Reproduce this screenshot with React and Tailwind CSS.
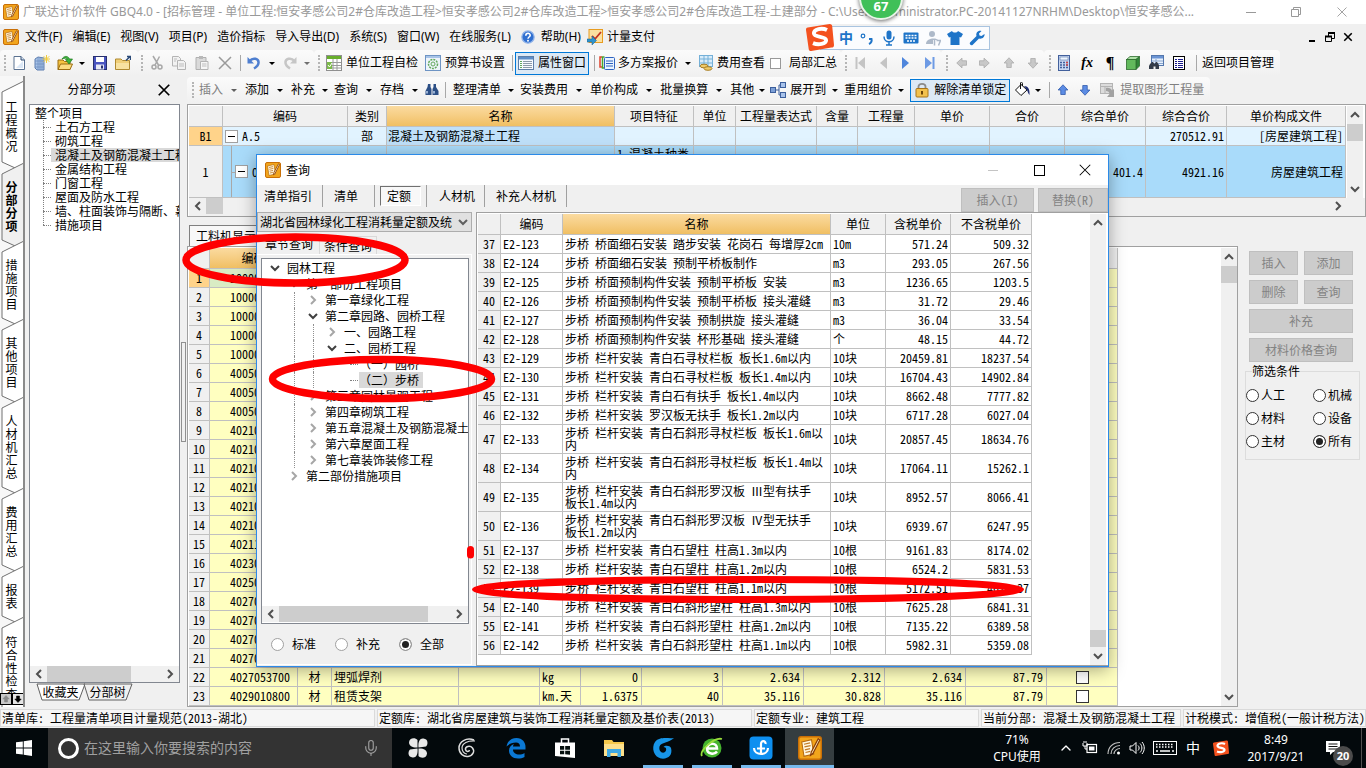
import { Mic, ChevronUp } from 'lucide-react'

const song = "font-['Noto_Sans_Mono_CJK_SC','Noto_Sans_CJK_SC','Liberation_Mono',monospace]"

/* ---------- icons ---------- */

const Svg = ({ children, className = 'w-4 h-4', box = '0 0 16 16' }) => (
    <svg viewBox={box} className={`shrink-0 ${className}`} fill="none" aria-hidden="true">{children}</svg>
)

const AppIcon = ({ className }) => (
    <Svg className={className}>
        <rect x="0.5" y="0.5" width="15" height="15" rx="1.5" fill="#f2a51c" stroke="#c96f06" />
        <path d="M2.5 4 L9 2.5 L10.5 12 L4 13.5 Z" fill="#fff8e0" stroke="#b56a10" strokeWidth="0.7" />
        <path d="M4 5.5 L8 4.6 M4.3 7.3 L8.4 6.4 M4.6 9.2 L8 8.4 M5 11 L8.2 10.2" stroke="#c07a28" strokeWidth="0.8" />
        <path d="M13.5 1.8 L14.6 2.6 L10 11.5 L8.4 12.8 L8.8 10.8 Z" fill="#fdf0c0" stroke="#8a3c08" strokeWidth="0.8" />
    </Svg>
)

const NewIcon = () => (
    <Svg>
        <path d="M3 1.5 H10 L13.5 5 V14.5 H3 Z" fill="#fff" stroke="#5b7291" />
        <path d="M10 1.5 V5 H13.5" fill="#d6e2f2" stroke="#2f4a70" />
        <path d="M5 13 L12 6 V13 Z" fill="#dbe7f5" />
    </Svg>
)

const BuildingIcon = () => (
    <Svg>
        <path d="M1 4 L4 2 L10 3 V15 H3 L1 13 Z" fill="#a9c4e8" stroke="#5f7fb0" />
        <path d="M4 2 V15 M6 3 V15 M8 3 V15 M1 6 H10 M1 9 H10 M1 12 H10" stroke="#6f8fc0" strokeWidth="0.8" />
        <path d="M12.5 0 V8 M8.5 4 H16.5 M9.7 1.2 L15.3 6.8 M15.3 1.2 L9.7 6.8" stroke="#f0cc3c" />
    </Svg>
)

const OpenIcon = () => (
    <Svg>
        <path d="M1 5 H6 L7.5 6.5 H13 V14.5 H1 Z" fill="#f5c341" stroke="#9b6d12" />
        <path d="M3.5 9 H15.5 L13 14.5 H1 Z" fill="#fbdc80" stroke="#9b6d12" />
        <path d="M5 4 C7 0.5 11 0.5 12.5 4 H15.5 L12 9 L8.5 4.5 H10.5 C9.5 2.500 7.500 3 5 4 Z" fill="#3cb43c" stroke="#1d7a1d" strokeWidth="0.7" />
    </Svg>
)

const SaveIcon = () => (
    <Svg>
        <rect x="1.5" y="1.5" width="13" height="13" fill="#4a55c0" stroke="#28306f" />
        <rect x="4" y="2" width="8" height="5" fill="#fff" />
        <rect x="4" y="9.5" width="8" height="5" fill="#e8eaf5" />
        <rect x="9" y="10.5" width="2" height="3" fill="#28306f" />
    </Svg>
)

const FolderIcon = () => (
    <Svg>
        <path d="M0.5 4 H6 L7.5 5.5 H14.5 V14.5 H0.5 Z" fill="#f0cf78" stroke="#b08a30" />
        <path d="M1 8 H14 V14 H1 Z" fill="#f8e2a0" />
        <path d="M11 5.5 L14.5 2 M12 1.5 H15.5 V5" stroke="#2b4a78" strokeWidth="1.5" />
    </Svg>
)

const CutIcon = () => (
    <Svg>
        <path d="M4 1 L9.5 10 M10.5 1.5 L6 10" stroke="#a8a8a8" strokeWidth="1.5" />
        <circle cx="5" cy="12" r="2" stroke="#a8a8a8" strokeWidth="1.5" />
        <circle cx="11" cy="12" r="2" stroke="#a8a8a8" strokeWidth="1.5" />
    </Svg>
)

const CopyIcon = () => (
    <Svg>
        <path d="M1.5 1.5 H7.5 L9.5 3.5 V11 H1.5 Z" fill="#f2f2f2" stroke="#b4b4b4" />
        <path d="M6.5 5.5 H12.5 L14.5 7.5 V14.5 H6.5 Z" fill="#f2f2f2" stroke="#b4b4b4" />
        <path d="M8 9 H13 M8 11 H13 M3 4 H6 M3 6 H5" stroke="#bdbdbd" />
    </Svg>
)

const PasteIcon = () => (
    <Svg>
        <path d="M2 2.5 H12 V14.5 H2 Z" fill="#dadada" stroke="#b0b0b0" />
        <rect x="5" y="1" width="4" height="3" fill="#b8b8b8" />
        <path d="M6.5 6.5 H14 V14.5 H6.5 Z" fill="#f6f6f6" stroke="#b4b4b4" />
        <path d="M8 9 H12.5 M8 11 H12.5" stroke="#bdbdbd" />
    </Svg>
)

const CrossIcon = ({ className = 'w-4 h-4', stroke = '#9a9a9a', width = 1.5 }) => (
    <Svg className={className}><path d="M2 2 L14 14 M14 2 L2 14" stroke={stroke} strokeWidth={width} /></Svg>
)

const TurnIcon = ({ flip, color }) => (
    <Svg className={flip ? 'w-4 h-4 -scale-x-100' : 'w-4 h-4'}>
        <path d="M3.5 6 C7 2 13 3.5 12.5 8 C12.3 10.5 10.5 12 8 13.5" stroke={color} strokeWidth="2.5" />
        <path d="M1.5 2 V8.5 H8 Z" fill={color} />
    </Svg>
)

const SheetIcon = () => (
    <Svg>
        <rect x="0.5" y="0.5" width="15" height="15" fill="#fff" stroke="#8f8f8f" />
        <rect x="1" y="1" width="14" height="3" fill="#67ae2c" />
        <path d="M1 7.5 H15 M1 10.5 H15 M1 13 H15 M7 4 V15 M11 4 V15" stroke="#9a9a9a" />
        <rect x="1" y="7" width="5" height="7" fill="#7cba4a" />
        <path d="M2 10 L3.5 12 L6 8" stroke="#fff" />
    </Svg>
)

const GearIcon = () => (
    <Svg>
        <rect x="0.5" y="0.5" width="15" height="15" fill="#eef4fb" stroke="#6e94c4" />
        <rect x="1" y="1" width="14" height="2" fill="#a8c4e8" />
        <circle cx="8" cy="9" r="4.5" stroke="#62a95c" strokeDasharray="2 1" strokeWidth="1.5" />
        <circle cx="8" cy="9" r="2" stroke="#62a95c" />
    </Svg>
)

const ListWindowIcon = () => (
    <Svg>
        <rect x="0.5" y="1.5" width="15" height="13" fill="#f7fbff" stroke="#5e7fa8" />
        <rect x="1" y="2" width="14" height="2.5" fill="#5f8fc8" />
        <path d="M2 6.5 H4 M2 8.5 H4 M2 10.5 H4 M2 12.5 H4" stroke="#62a95c" />
        <path d="M5 6.5 H14 M5 8.5 H14 M5 10.5 H14 M5 12.5 H14" stroke="#8d9aaa" />
    </Svg>
)

const PlansIcon = () => (
    <Svg>
        <path d="M3 2 H1 V12 H3" stroke="#e0432c" strokeWidth="1.5" />
        <path d="M5.5 2 H3.5 V13 H5.5" stroke="#49a52d" strokeWidth="1.5" />
        <rect x="5.5" y="2.5" width="10" height="12" rx="1" fill="#eaf3ff" stroke="#2d62c0" />
        <path d="M7 6 H14 M7 8.5 H14 M7 11 H14" stroke="#2d62c0" />
    </Svg>
)

const FeeIcon = () => (
    <Svg>
        <rect x="1.5" y="0.5" width="13" height="11" fill="#d8ecfa" stroke="#74b0d8" />
        <path d="M1 4 H15 M1 8 H15 M6 1 V11 M10 1 V11" stroke="#74b0d8" />
        <ellipse cx="6" cy="11" rx="4" ry="1.8" fill="#f0cb6a" stroke="#a87f28" />
        <ellipse cx="10" cy="13.5" rx="4" ry="1.8" fill="#f0cb6a" stroke="#a87f28" />
    </Svg>
)

const StepIcon = ({ flip, bar, color }) => (
    <Svg className={flip ? 'w-4 h-4 -scale-x-100' : 'w-4 h-4'}>
        <path d="M4 2 L11 8 L4 14 Z" fill={color} />
        {bar && <path d="M12.5 2 V14" stroke={color} strokeWidth="2" />}
    </Svg>
)

const turns = { left: '', up: 'rotate-90', right: 'rotate-180', down: '-rotate-90' }
const ArrowIcon = ({ dir, color = '#c8c8c8', line = '#a8a8a8', size = 'w-3 h-3' }) => (
    <Svg className={`${size} ${turns[dir]}`}>
        <path d="M1 8 L8 1.5 V5 H14 V11 H8 V14.5 Z" fill={color} stroke={line} />
    </Svg>
)

const CalcIcon = () => (
    <Svg>
        <rect x="2.5" y="0.5" width="11" height="15" fill="#c9d8f2" stroke="#42609c" />
        <rect x="4" y="2" width="8" height="3" fill="#eef6ff" stroke="#42609c" strokeWidth="0.5" />
        <path d="M4 7.5 H12 M4 10 H12 M4 12.5 H12" stroke="#42609c" strokeDasharray="2 1" strokeWidth="1.5" />
        <path d="M10 7.5 H12 M10 10 H12" stroke="#d04848" strokeWidth="1.5" />
    </Svg>
)

const CubeIcon = () => (
    <Svg>
        <path d="M1.5 4.5 L5 1.5 H14.5 L11 4.5 Z" fill="#b0e2a8" stroke="#2f6c2f" strokeWidth="0.8" />
        <path d="M11 4.5 L14.5 1.5 V11 L11 14.5 Z" fill="#2f8638" stroke="#2f6c2f" strokeWidth="0.8" />
        <rect x="1.5" y="4.5" width="9.5" height="10" fill="#62b95c" stroke="#2f6c2f" strokeWidth="0.8" />
    </Svg>
)

const BinocularIcon = () => (
    <Svg>
        <path d="M4 2 H6.5 V5 L7.5 7 V13 H1.5 V9 L3.5 5 Z M9.5 2 H12 V5 L14.5 9 V13 H8.5 V7 L9.5 5 Z" fill="#2c4f86" />
        <path d="M3 9 V11.5 M10 9 V11.5" stroke="#bcd2f0" strokeWidth="1.5" />
    </Svg>
)

const FindSheetIcon = () => (
    <Svg>
        <rect x="3.5" y="0.5" width="12" height="10" fill="#e8f1fc" stroke="#5477ac" />
        <rect x="4" y="1" width="11" height="2.5" fill="#6b94d4" />
        <path d="M4 6 H15 M4 8.5 H15 M8 4 V10" stroke="#8aa7d0" />
        <path d="M2 9 L4 7 H5 L6.5 9 L8 7 H9 L11 10 V14 H7.5 V11.5 H5.5 V14 H1 V11 Z" fill="#333c4a" />
    </Svg>
)

const RowsIcon = () => (
    <Svg>
        <rect x="2.5" y="1.5" width="11" height="13" fill="#fff" stroke="#000" />
        <path d="M4 4.5 H6 M7 4.5 H12 M4 6.5 H6 M7 6.5 H12 M4 8.5 H6 M7 8.5 H12 M4 10.5 H6 M7 10.5 H12 M4 12.5 H6 M7 12.5 H12" stroke="#1b1b8c" />
    </Svg>
)

const ExpandIcon = () => (
    <Svg>
        <rect x="0.5" y="5.5" width="5" height="5" fill="#7c9fd6" stroke="#3c5f9c" />
        <path d="M6 8 H9 M9 3 V13 H11 M9 3 H11" stroke="#3c5f9c" />
        <rect x="10.5" y="0.5" width="5" height="5" fill="#a8c2ea" stroke="#3c5f9c" />
        <rect x="10.5" y="10.5" width="5" height="5" fill="#a8c2ea" stroke="#3c5f9c" />
    </Svg>
)

const LockIcon = () => (
    <Svg>
        <path d="M4.5 7 V4.5 C4.5 1 11.5 1 11.5 4.5 V7" stroke="#8c8c8c" strokeWidth="1.8" />
        <rect x="2" y="6.5" width="12" height="8.5" rx="1" fill="#f2c14e" stroke="#a87518" />
        <path d="M8 9 V12.5" stroke="#6a4408" strokeWidth="2" />
    </Svg>
)

const BucketIcon = () => (
    <Svg>
        <path d="M7 2.5 L13 8 L7 13.5 L1.5 8 Z" fill="#fff" stroke="#111" />
        <path d="M6.5 7 V1 C6.5 0 8.5 0 8.5 1.5 V4" stroke="#111" />
        <path d="M10 4 C14 4 16 7 15.500 13 C13.5 11 14 9.500 13 8 Z" fill="#1c2a70" />
    </Svg>
)

const ExtractIcon = () => (
    <Svg>
        <rect x="0.5" y="1.5" width="12" height="10" fill="#dcdcdc" stroke="#b4b4b4" />
        <path d="M1 4.5 H12 M5 4 V11" stroke="#b4b4b4" />
        <path d="M6 6 C9 5.500 11 6.500 12 8.500 L14 7 V15 H7 L9.500 12 C9.500 10 8 9 6 9 Z" fill="#a2a2a2" />
    </Svg>
)

const HelpIcon = () => (
    <Svg className="w-3.5 h-3.5">
        <circle cx="8" cy="8" r="7" fill="#2f6fd0" stroke="#8fb2e8" strokeWidth="1.5" />
        <path d="M5.5 6.5 C5.5 3 10.5 3 10.5 6 C10.5 8 8 8 8 10" stroke="#fff" strokeWidth="1.8" />
        <circle cx="8" cy="12.2" r="1.1" fill="#fff" />
    </Svg>
)

const PayIcon = () => (
    <Svg>
        <rect x="2" y="0.5" width="13.5" height="13" fill="#fbe0a0" stroke="#e89c20" />
        <path d="M5 7 L8 10 L14 3" stroke="#c23020" strokeWidth="1.8" />
        <path d="M0 10 H5 V7 L9.5 11.5 L5 16 V13 H0 Z" fill="#2f93cc" stroke="#1b618c" strokeWidth="0.5" />
    </Svg>
)

const SogouIcon = ({ className }) => (
    <Svg className={className}>
        <path d="M1 2.5 L13.5 0.5 C14.5 0.5 15 1 15 2 L16 12.5 C16 13.5 15.5 14 14.5 14 L3 16 C2 16 1.6 15.5 1.5 14.5 L0 4 C0 3 0.2 2.7 1 2.5 Z" fill="#f4511e" />
        <path d="M12 4 C9 2.5 4.5 3.5 4.5 5.8 C4.5 8.5 11.5 7.3 11.5 9.8 C11.5 12 7 12.8 4 11.5" stroke="#fff" strokeWidth="2.2" />
    </Svg>
)

const chevrons = { up: '', right: 'rotate-90', down: 'rotate-180', left: '-rotate-90' }
const Chevron = ({ dir, color = '#505050', className = 'w-2.5 h-2.5' }) => (
    <Svg box="0 0 10 10" className={`${className} ${chevrons[dir]}`}>
        <path d="M1 7 L5 3 L9 7" stroke={color} strokeWidth="2" />
    </Svg>
)

/* ---------- toolbar parts ---------- */

const Group = ({ children }) => (
    <div className="flex h-[26px] items-center rounded-sm bg-linear-to-b from-[#fbfbfb] to-[#f0f0f0]">{children}</div>
)

const Grip = ({ className = 'w-2.5' }) => (
    <span className={`flex justify-center shrink-0 ${className}`}>
        <span className="h-4 border-l-2 border-dotted border-[#b5b5b5]" />
    </span>
)

const Sep = ({ className = 'w-2' }) => (
    <span className={`flex justify-center shrink-0 ${className}`}><span className="h-4 w-px bg-[#a8a8a8]" /></span>
)

const Tool = ({ label, className, children }) => (
    <button type="button" aria-label={label} className={`flex h-6 shrink-0 items-center justify-center ${className}`}>{children}</button>
)

const Caret = ({ className = 'w-[22px]', color = 'border-t-black' }) => (
    <span className={`flex shrink-0 justify-center ${className}`}>
        <span className={`border-x-3 border-t-3 border-x-transparent ${color}`} />
    </span>
)

const Drop = ({ children, caret = 'w-[22px]', muted }) => (
    <button type="button" className={`flex h-6 shrink-0 items-center whitespace-nowrap ${muted ? 'text-[#808080]' : ''}`}>
        {children}
        <Caret className={caret} color={muted ? 'border-t-[#606060]' : 'border-t-black'} />
    </button>
)

/* ---------- top of the window ---------- */

const TitleBar = () => (
    <header className="flex h-6 shrink-0 items-center bg-white pl-[3px] text-[#999]">
        <AppIcon className="w-4 h-4" />
        <h1 className="ml-1 w-[1204px] truncate text-xs">
            广联达计价软件 GBQ4.0 - [招标管理 - 单位工程:恒安孝感公司2#仓库改造工程&gt;恒安孝感公司2#仓库改造工程&gt;恒安孝感公司2#仓库改造工程-土建部分 - C:\Users\Administrator.PC-20141127NRHM\Desktop\恒安孝感公...
        </h1>
        <div className="ml-auto flex">
            <Tool label="最小化" className="w-[46px]"><span className="h-px w-2.5 bg-[#999]" /></Tool>
            <Tool label="还原" className="w-11">
                <Svg className="w-3 h-3" box="0 0 12 12"><path d="M1.5 3.5 H8.5 V10.5 H1.5 Z M3.5 3.5 V1.5 H10.5 V8.5 H8.5" stroke="#999" /></Svg>
            </Tool>
            <Tool label="关闭" className="w-12"><CrossIcon className="w-3 h-3" width={1.2} /></Tool>
        </div>
    </header>
)

const menus = ['文件(F)', '编辑(E)', '视图(V)', '项目(P)', '造价指标', '导入导出(D)', '系统(S)', '窗口(W)', '在线服务(L)']

const MenuBar = () => (
    <nav className="flex h-[26px] shrink-0 items-center pl-[3px] text-xs">
        <AppIcon className="w-4 h-4" />
        <div className="ml-1.5 flex items-center gap-2.5 whitespace-nowrap">
            {menus.map((m) => <button type="button" key={m}>{m}</button>)}
            <button type="button" className="flex items-center gap-1.5"><HelpIcon />帮助(H)</button>
        </div>
        <button type="button" className="ml-1.5 flex items-center gap-1"><PayIcon />计量支付</button>
        <div className="ml-auto flex pr-2">
            <Tool label="最小化文档" className="w-5"><span className="mt-2 h-0.5 w-1.5 bg-black" /></Tool>
            <Tool label="还原文档" className="w-4">
                <Svg className="w-2.5 h-2.5" box="0 0 10 10"><path d="M0.5 4.5 H6.5 V9.5 H0.5 Z M3.5 4.5 V1 H9.5 V6.5 H6.5" stroke="#000" /><path d="M3 1 H10 M0 4.5 H7" stroke="#000" strokeWidth="2" /></Svg>
            </Tool>
            <Tool label="关闭文档" className="w-5"><CrossIcon className="w-2.5 h-2.5" stroke="#000" width={2.5} /></Tool>
        </div>
    </nav>
)

const MainToolbar = () => (
    <div className="flex h-[26px] shrink-0 items-center text-xs">
        <Group>
            <Grip />
            <Tool label="新建" className="w-[17px]"><NewIcon /></Tool>
            <Tool label="新建工程" className="w-[30px]"><BuildingIcon /></Tool>
            <Tool label="打开" className="w-4"><OpenIcon /></Tool>
            <Caret className="w-[18px]" />
            <Tool label="保存" className="w-[17px]"><SaveIcon /></Tool>
            <Tool label="关闭工程" className="w-[30px]"><FolderIcon /></Tool>
        </Group>
        <Group>
            <Grip className="w-2" />
            <Tool label="剪切" className="w-[22px]"><CutIcon /></Tool>
            <Tool label="复制" className="w-[21px]"><CopyIcon /></Tool>
            <Tool label="粘贴" className="w-[26px]"><PasteIcon /></Tool>
            <Tool label="删除" className="w-5"><CrossIcon /></Tool>
            <Sep className="w-2.5" />
            <Tool label="撤消" className="w-[18px]"><TurnIcon color="#4f7fd0" /></Tool>
            <Caret className="w-[17px]" />
            <Tool label="恢复" className="w-[19px]"><TurnIcon flip color="#c6c6c6" /></Tool>
            <Caret className="w-[15px]" color="border-t-[#707070]" />
        </Group>
        <Group>
            <Grip />
            <button type="button" className="flex shrink-0 items-center gap-1 pl-0.5 pr-[5px] whitespace-nowrap"><SheetIcon />单位工程自检</button>
            <button type="button" className="flex shrink-0 items-center gap-1 pl-0.5 pr-[5px] whitespace-nowrap"><GearIcon />预算书设置</button>
            <Sep className="w-[5px]" />
            <button type="button" className="flex h-[23px] shrink-0 items-center gap-1 border border-[#0078d7] bg-[#dce9f5] px-0.5 whitespace-nowrap"><ListWindowIcon />属性窗口</button>
            <Sep className="w-2.5" />
            <button type="button" className="flex shrink-0 items-center gap-[3px] whitespace-nowrap"><PlansIcon />多方案报价</button>
            <Caret className="w-5" />
            <button type="button" className="flex shrink-0 items-center gap-[3px] pr-[5px] whitespace-nowrap"><FeeIcon />费用查看</button>
            <label className="flex shrink-0 items-center gap-2 pr-1 whitespace-nowrap">
                <input type="checkbox" className="h-[11px] w-[11px] appearance-none border border-[#999] bg-white" />
                局部汇总
            </label>
        </Group>
        <Group>
            <Grip />
            <Tool label="首条" className="w-[19px]"><StepIcon flip bar color="#c4c4c4" /></Tool>
            <Tool label="上一条" className="w-[25px]"><StepIcon flip color="#c4c4c4" /></Tool>
            <Tool label="下一条" className="w-[22px]"><StepIcon color="#4f86dc" /></Tool>
            <Tool label="末条" className="w-6"><StepIcon bar color="#6d9ae4" /></Tool>
        </Group>
        <Group>
            <Grip className="w-3" />
            <Tool label="左移" className="w-[18px]"><ArrowIcon dir="left" /></Tool>
            <Tool label="右移" className="w-[26px]"><ArrowIcon dir="right" /></Tool>
            <Tool label="上移" className="w-6"><ArrowIcon dir="up" /></Tool>
            <Tool label="下移" className="w-[23px]"><ArrowIcon dir="down" /></Tool>
        </Group>
        <Group>
            <Grip className="w-3" />
            <Tool label="计算器" className="w-4"><CalcIcon /></Tool>
            <Tool label="函数" className="w-[30px] font-['Liberation_Serif',serif] text-sm font-bold italic">fx</Tool>
            <Tool label="段落" className="w-4 font-['Liberation_Serif',serif] text-base font-bold">¶</Tool>
            <Tool label="图元" className="w-[30px]"><CubeIcon /></Tool>
            <Tool label="查找" className="w-4"><FindSheetIcon /></Tool>
            <Tool label="列表" className="w-[30px]"><RowsIcon /></Tool>
            <Sep className="w-1" />
            <button type="button" className="shrink-0 pl-1 pr-1.5 whitespace-nowrap">返回项目管理</button>
        </Group>
    </div>
)

const EditToolbar = () => (
    <div className="flex h-7 shrink-0 items-center text-xs">
        <Group>
            <Grip className="w-3" />
            <Drop muted>插入</Drop>
            <Drop>添加</Drop>
            <Drop caret="w-[19px]">补充</Drop>
            <Drop>查询</Drop>
            <Drop>存档</Drop>
            <Tool label="查找" className="w-[11px]"><BinocularIcon /></Tool>
            <Sep className="w-4" />
            <Drop caret="w-[19px]">整理清单</Drop>
            <Drop>安装费用</Drop>
            <Drop>单价构成</Drop>
            <Drop>批量换算</Drop>
            <Drop caret="w-4">其他</Drop>
            <Drop caret="w-[18px]"><ExpandIcon /><span className="ml-1">展开到</span></Drop>
            <Drop caret="w-[18px]">重用组价</Drop>
            <button type="button" className="flex h-[23px] shrink-0 items-center gap-1 border border-[#0078d7] bg-[#dce9f5] px-[3px] whitespace-nowrap"><LockIcon />解除清单锁定</button>
            <Tool label="填充" className="ml-1 w-4"><BucketIcon /></Tool>
            <Caret className="w-4" />
            <Sep className="w-1.5" />
            <Tool label="上移" className="w-[22px]"><ArrowIcon dir="up" color="#5c8ce4" line="#2c55a8" /></Tool>
            <Tool label="下移" className="w-[22px]"><ArrowIcon dir="down" color="#5c8ce4" line="#2c55a8" /></Tool>
            <button type="button" className="ml-1 flex items-center gap-1 pr-1.5 whitespace-nowrap text-[#808080]"><ExtractIcon />提取图形工程量</button>
        </Group>
    </div>
)

/* ---------- left side ---------- */

const sideTabs = [
    { text: '工程概况', h: 82 },
    { text: '分部分项', h: 78, active: true },
    { text: '措施项目', h: 78 },
    { text: '其他项目', h: 78 },
    { text: '人材机汇总', h: 91 },
    { text: '费用汇总', h: 78 },
    { text: '报表', h: 51 },
    { text: '符合性检查', h: 92 },
]

const SideTabs = () => (
    <div className="relative flex w-[25px] shrink-0 flex-col overflow-hidden border-r-2 border-[#8a8a8a] bg-[#f7f7f7] pt-2.5">
        {sideTabs.map(({ text, h, active }) => (
            <button type="button" key={text} className="relative flex w-full shrink-0 items-center justify-center" style={{ height: h }}>
                <svg className="absolute inset-0 h-full w-full overflow-visible" aria-hidden="true">
                    <polygon points={`24,-5 2,6 2,${h - 6} 24,${h + 4}`} fill={active ? '#f0f0f0' : '#fff'} stroke="#707070" />
                </svg>
                <span className={`relative w-3 text-xs leading-[13px] break-all ${active ? 'font-bold' : ''}`}>{text}</span>
            </button>
        ))}
        <div className="absolute bottom-0.5 left-0 flex">
            <button type="button" aria-label="上翻" className="flex h-3 w-3 items-center justify-center border border-black bg-[#c8c8c8]"><ArrowIcon dir="up" color="#888" line="#888" size="w-2 h-2" /></button>
            <button type="button" aria-label="下翻" className="flex h-3 w-3 items-center justify-center border border-black bg-[#e4e4e4]"><ArrowIcon dir="down" color="#000" line="#000" size="w-2 h-2" /></button>
        </div>
    </div>
)

const sections = ['土石方工程', '砌筑工程', '混凝土及钢筋混凝土工程', '金属结构工程', '门窗工程', '屋面及防水工程', '墙、柱面装饰与隔断、幕', '措施项目']

const HScroll = ({ thumb }) => (
    <div className="flex h-4 items-center bg-[#f0f0f0] px-1">
        <Chevron dir="left" />
        <div className="mx-[3px] h-full grow"><div className={`h-full bg-[#cdcdcd] ${thumb}`} /></div>
        <Chevron dir="right" />
    </div>
)

const VScroll = ({ thumb }) => (
    <div className="flex w-4 shrink-0 flex-col items-center bg-[#f0f0f0] py-1">
        <Chevron dir="up" />
        <div className={`mt-1 flex w-full grow flex-col ${thumb}`}><div className="h-[17px] w-full bg-[#cdcdcd]" /></div>
        <Chevron dir="down" />
    </div>
)

const SectionPanel = () => (
    <aside className="flex w-[155px] shrink-0 flex-col pl-1 text-xs">
        <div className="flex h-7 items-center pr-0.5">
            <h2 className="grow pl-1 text-center">分部分项</h2>
            <Tool label="关闭面板" className="w-7"><CrossIcon className="w-3.5 h-3.5" stroke="#000" width={2} /></Tool>
        </div>
        <div className="flex grow flex-col border border-[#828790] bg-white">
            <div className={`grow overflow-hidden pt-px leading-[14px] whitespace-nowrap ${song}`}>
                <div className="pl-[5px]">整个项目</div>
                <ul className="relative ml-[13px]">
                    <span className="absolute top-0 left-0 h-[105px] border-l border-dotted border-[#808080]" />
                    {sections.map((s, i) => (
                        <li key={s} className="flex items-center">
                            <span className="w-2 shrink-0 border-t border-dotted border-[#808080]" />
                            <span className={`grow pl-1 ${i === 2 ? 'bg-[#d9d9d9]' : ''}`}>{s}</span>
                        </li>
                    ))}
                </ul>
            </div>
            <HScroll thumb="w-[84px]" />
        </div>
        <div className={`flex h-6 pt-px pl-2 ${song}`}>
            {['收藏夹', '分部树'].map((t) => (
                <button type="button" key={t} className="relative h-4 w-[47px]">
                    <svg className="absolute inset-0 h-full w-full overflow-visible" aria-hidden="true">
                        <polygon points="0,0 5,16 42,16 48,0" fill={t === '收藏夹' ? '#fff' : '#f0f0f0'} stroke="#606060" />
                    </svg>
                    <span className="relative leading-4">{t}</span>
                </button>
            ))}
        </div>
    </aside>
)

/* ---------- upper grid ---------- */

const cell = 'border-r border-b border-[#c0c0c0] overflow-hidden'
const orange = 'bg-linear-to-b from-[#fbdba0] to-[#f0bf62]'

const billCols = [
    ['', 'w-[34px]'], ['编码', 'w-[125px]'], ['类别', 'w-[39px]'], ['名称', 'w-[228px]'], ['项目特征', 'w-[79px]'],
    ['单位', 'w-[42px]'], ['工程量表达式', 'w-[81px]'], ['含量', 'w-[41px]'], ['工程量', 'w-[57px]'], ['单价', 'w-[75px]'],
    ['合价', 'w-[75px]'], ['综合单价', 'w-[81px]'], ['综合合价', 'w-[81px]'], ['单价构成文件', ''],
]

const Minus = () => (
    <span className="flex h-[13px] w-[13px] shrink-0 items-center justify-center border border-[#a0a0a0] bg-white"><span className="h-px w-[7px] bg-black" /></span>
)

const BillGrid = () => (
    <div className="flex h-[113px] shrink-0 flex-col border border-[#a0a0a0] bg-white pt-px pl-px">
        <div className="flex min-h-0 grow">
            <div className="min-w-0 grow overflow-hidden">
                <table className={`w-full table-fixed border-separate border-spacing-0 text-xs leading-4 whitespace-nowrap ${song}`}>
                    <thead>
                        <tr>
                            {billCols.map(([name, w], i) => (
                                <th key={i} className={`h-[21px] font-normal ${cell} ${w} ${name === '名称' ? orange : 'bg-[#f0f0f0]'}`}>{name}</th>
                            ))}
                        </tr>
                    </thead>
                    <tbody>
                        <tr className="bg-[#e1f3ff]">
                            <th className={`h-[19px] bg-[#ffd38a] font-normal ${cell}`}>B1</th>
                            <td className={cell}><span className="flex items-center gap-1 pl-0.5"><Minus />A.5</span></td>
                            <td className={`text-center ${cell}`}>部</td>
                            <td className={`bg-[#bfe0f9] pl-px ${cell}`}>混凝土及钢筋混凝土工程</td>
                            {[4, 5, 6, 7, 8, 9, 10, 11].map((i) => <td key={i} className={cell} />)}
                            <td className={`pr-0.5 text-right ${cell}`}>270512.91</td>
                            <td className={`pr-0.5 text-right ${cell}`}>[房屋建筑工程]</td>
                        </tr>
                        <tr className="bg-[#a9dbfa]">
                            <th className={`h-[52px] bg-[#f0f0f0] font-normal ${cell}`}>1</th>
                            <td className={cell}>
                                <span className="flex h-[51px] pl-2 text-left">
                                    <span className="w-px bg-[#a8a8a8]" />
                                    <span className="mt-[26px] h-px w-[3px] bg-[#a8a8a8]" />
                                    <span className="flex items-center gap-1"><Minus />0</span>
                                </span>
                            </td>
                            <td className={cell} />
                            <td className={cell} />
                            <td className={`pl-0.5 align-top ${cell}`}>1.混凝土种类</td>
                            {[5, 6, 7, 8, 9, 10].map((i) => <td key={i} className={cell} />)}
                            <td className={`pr-0.5 text-right ${cell}`}>401.4</td>
                            <td className={`pr-0.5 text-right ${cell}`}>4921.16</td>
                            <td className={`pr-0.5 text-right ${cell}`}>房屋建筑工程</td>
                        </tr>
                    </tbody>
                </table>
            </div>
            <div className="ml-px mr-0.5 flex"><VScroll thumb="" /></div>
        </div>
        <div className="h-[18px] bg-[#f0f0f0] pr-[18px]"><HScroll thumb="w-[17px]" /></div>
    </div>
)

/* ---------- lower grid ---------- */

const resourceCols = [
    'w-[21px]', 'w-[88px]', 'w-[34px]', 'w-[127px]', 'w-[81px]', 'w-[41px]',
    'w-[61px]', 'w-[81px]', 'w-[81px]', 'w-[81px]', 'w-[81px]', 'w-[81px]', 'w-[71px]',
]

const codes = [
    '10000', '10000', '10000', '10000', '10000', '40050', '40050', '40050', '40210', '40210', '40210', '40210', '40210', '40210',
    '40211', '40230', '40250', '40270', '40270', '40270', '40270', '4027053700', '4029010800',
]

const details = {
    21: ['材', '埋弧焊剂', '', 'kg', '0', '3', '2.634', '2.312', '2.634', '87.79'],
    22: ['材', '租赁支架', '', 'km.天', '1.6375', '40', '35.116', '30.828', '35.116', '87.79'],
}
const blank = Array(10).fill('')

const detailAlign = (c) => {
    if (c === 0) return 'text-center'
    return c < 4 ? 'pl-0.5' : 'pr-[3px] text-right'
}

const ResourceGrid = () => (
    <div className="flex min-h-0 min-w-0 grow overflow-hidden border border-[#a0a0a0] bg-white pt-px pl-px">
        <div className="min-w-0 grow overflow-hidden">
            <table className={`w-[929px] table-fixed border-separate border-spacing-0 text-xs leading-4 whitespace-nowrap ${song}`}>
                <thead>
                    <tr>
                        {resourceCols.map((w, i) => (
                            <th key={i} className={`h-[21px] font-normal ${cell} ${w} ${i === 1 ? orange : 'bg-[#f0f0f0]'}`}>{i === 1 ? '编码' : ''}</th>
                        ))}
                    </tr>
                </thead>
                <tbody>
                    {codes.map((code, r) => (
                        <tr key={r} className="bg-[#ffffc0]">
                            <th className={`h-[19px] font-normal ${cell} ${r === 0 ? 'bg-[#ffd38a]' : 'bg-[#f0f0f0]'}`}>{r + 1}</th>
                            <td className={`pl-5 ${cell} ${r === 0 ? 'bg-[#d9ecc4]' : ''}`}>{code}</td>
                            {(details[r] || blank).map((v, c) => <td key={c} className={`${cell} ${detailAlign(c)}`}>{v}</td>)}
                            <td className={cell}>
                                <input type="checkbox" aria-label={`暂估 ${r + 1}`} className="mx-auto block h-[13px] w-[13px] appearance-none border border-[#333] bg-white" />
                            </td>
                        </tr>
                    ))}
                </tbody>
            </table>
        </div>
        <VScroll thumb="" />
    </div>
)

const GreyButton = ({ children, className = '' }) => (
    <button type="button" className={`h-6 border border-[#bfbfbf] bg-[#cccccc] text-[#838383] ${className}`}>{children}</button>
)

const Radio = ({ name, label, checked, className = 'gap-0.5', tone = 'border-[#333]' }) => (
    <label className={`flex items-center whitespace-nowrap ${className}`}>
        <input
            type="radio"
            name={name}
            defaultChecked={checked}
            className={`h-[13px] w-[13px] appearance-none rounded-full border bg-white checked:bg-[#222] checked:shadow-[inset_0_0_0_2px_#fff] ${tone}`}
        />
        {label}
    </label>
)

const SidePanel = () => (
    <aside className={`w-[128px] shrink-0 pt-[5px] pr-1.5 pl-[7px] text-xs ${song}`}>
        <div className="grid grid-cols-2 gap-x-1.5 gap-y-[5px] px-1 pr-[7px]">
            <GreyButton>插入</GreyButton>
            <GreyButton>添加</GreyButton>
            <GreyButton>删除</GreyButton>
            <GreyButton>查询</GreyButton>
            <GreyButton className="col-span-2">补充</GreyButton>
            <GreyButton className="col-span-2">材料价格查询</GreyButton>
        </div>
        <fieldset className="mt-px h-[97px] border border-[#dcdcdc]">
            <legend className="ml-1.5 leading-4">筛选条件</legend>
            <div className="grid grid-cols-[67px_1fr] gap-y-[7px] pt-2 leading-4">
                <Radio name="filter" label="人工" />
                <Radio name="filter" label="机械" />
                <Radio name="filter" label="材料" />
                <Radio name="filter" label="设备" />
                <Radio name="filter" label="主材" />
                <Radio name="filter" label="所有" checked />
            </div>
        </fieldset>
    </aside>
)

/* ---------- query dialog ---------- */

const chapters = [
    { level: 0, text: '园林工程', state: 'open' },
    { level: 1, text: '第一部份工程项目', state: 'open' },
    { level: 2, text: '第一章绿化工程', state: 'closed' },
    { level: 2, text: '第二章园路、园桥工程', state: 'open' },
    { level: 3, text: '一、园路工程', state: 'closed' },
    { level: 3, text: '二、园桥工程', state: 'open' },
    { level: 4, text: '（一）园桥' },
    { level: 4, text: '（二）步桥', selected: true },
    { level: 2, text: '第三章园林景观工程', state: 'closed' },
    { level: 2, text: '第四章砌筑工程', state: 'closed' },
    { level: 2, text: '第五章混凝土及钢筋混凝土', state: 'closed' },
    { level: 2, text: '第六章屋面工程', state: 'closed' },
    { level: 2, text: '第七章装饰装修工程', state: 'closed' },
    { level: 1, text: '第二部份措施项目', state: 'closed' },
]

const quotas = [
    [37, 'E2-123', '步桥 桥面细石安装 踏步安装 花岗石 每增厚2cm', '10m', '571.24', '509.32'],
    [38, 'E2-124', '步桥 桥面细石安装 预制平桥板制作', 'm3', '293.05', '267.56'],
    [39, 'E2-125', '步桥 桥面预制构件安装 预制平桥板 安装', 'm3', '1236.65', '1203.5'],
    [40, 'E2-126', '步桥 桥面预制构件安装 预制平桥板 接头灌缝', 'm3', '31.72', '29.46'],
    [41, 'E2-127', '步桥 桥面预制构件安装 预制拱旋 接头灌缝', 'm3', '36.04', '33.54'],
    [42, 'E2-128', '步桥 桥面预制构件安装 杯形基础 接头灌缝', '个', '48.15', '44.72'],
    [43, 'E2-129', '步桥 栏杆安装 青白石寻杖栏板 板长1.6m以内', '10块', '20459.81', '18237.54'],
    [44, 'E2-130', '步桥 栏杆安装 青白石寻杖栏板 板长1.4m以内', '10块', '16704.43', '14902.84'],
    [45, 'E2-131', '步桥 栏杆安装 青白石有扶手 板长1.4m以内', '10块', '8662.48', '7777.82'],
    [46, 'E2-132', '步桥 栏杆安装 罗汉板无扶手 板长1.2m以内', '10块', '6717.28', '6027.04'],
    [47, 'E2-133', '步桥 栏杆安装 青白石斜形寻杖栏板 板长1.6m以内', '10块', '20857.45', '18634.76'],
    [48, 'E2-134', '步桥 栏杆安装 青白石斜形寻杖栏板 板长1.4m以内', '10块', '17064.11', '15262.1'],
    [49, 'E2-135', '步桥 栏杆安装 青白石斜形罗汉板 Ⅲ型有扶手 板长1.4m以内', '10块', '8952.57', '8066.41'],
    [50, 'E2-136', '步桥 栏杆安装 青白石斜形罗汉板 Ⅳ型无扶手 板长1.2m以内', '10块', '6939.67', '6247.95'],
    [51, 'E2-137', '步桥 栏杆安装 青白石望柱 柱高1.3m以内', '10根', '9161.83', '8174.02'],
    [52, 'E2-138', '步桥 栏杆安装 青白石望柱 柱高1.2m以内', '10根', '6524.2', '5831.53'],
    [53, 'E2-139', '步桥 栏杆安装 青白石望柱 柱高1.1m以内', '10根', '5172.51', '4619.37'],
    [54, 'E2-140', '步桥 栏杆安装 青白石斜形望柱 柱高1.3m以内', '10根', '7625.28', '6841.31'],
    [55, 'E2-141', '步桥 栏杆安装 青白石斜形望柱 柱高1.2m以内', '10根', '7135.22', '6389.58'],
    [56, 'E2-142', '步桥 栏杆安装 青白石斜形望柱 柱高1.1m以内', '10根', '5982.31', '5359.08'],
]

const ChapterTree = () => (
    <ul className="grow overflow-hidden pt-px leading-4 whitespace-nowrap">
        {chapters.map(({ level, text, state, selected }) => (
            <li key={text} className="flex pl-2">
                {Array.from({ length: level }, (_, i) => (
                    <span key={i} className="flex w-[19px] shrink-0 pl-[5px]">
                        {i > 0 && i < 3 && <span className="h-full border-l border-dotted border-[#909090]" />}
                    </span>
                ))}
                <span className={`flex shrink-0 items-center ${state ? 'w-[17px]' : 'w-[13px] pl-1'}`}>
                    {state === 'open' && <Chevron dir="down" color="#404040" />}
                    {state === 'closed' && <Chevron dir="right" color="#a6a6a6" />}
                    {!state && <span className="w-2 border-t border-dotted border-[#808080]" />}
                </span>
                <span className={`${selected ? 'bg-[#d9d9d9]' : ''} ${state ? '' : 'pr-1'}`}>{text}</span>
            </li>
        ))}
    </ul>
)

const QuotaTable = () => (
    <div className="flex min-w-0 grow border border-r-0 border-[#a0a0a0] bg-white pt-px pl-px">
        <div className="min-w-0 grow overflow-hidden">
            <table className="w-[554px] table-fixed border-separate border-spacing-0">
                <thead>
                    <tr>
                        {[['', 'w-[23px]'], ['编码', 'w-[62px]'], ['名称', 'w-[268px]'], ['单位', 'w-[55px]'], ['含税单价', 'w-[65px]'], ['不含税单价', 'w-[81px]']].map(([name, w]) => (
                            <th key={name} className={`h-[21px] font-normal ${cell} ${w} ${name === '名称' ? orange : 'bg-[#f0f0f0]'}`}>{name}</th>
                        ))}
                    </tr>
                </thead>
                <tbody>
                    {quotas.map(([no, code, name, unit, taxed, net]) => (
                        <tr key={no} className={no > 46 && no < 51 ? 'h-[29px]' : 'h-[19px]'}>
                            <th className={`bg-[#f0f0f0] font-normal leading-4 ${cell}`}>{no}</th>
                            <td className={`pl-0.5 leading-4 ${cell}`}>{code}</td>
                            <td className={`pr-1 pl-0.5 leading-3 ${cell}`}>{name}</td>
                            <td className={`pl-0.5 leading-4 ${cell}`}>{unit}</td>
                            <td className={`pr-0.5 text-right leading-4 ${cell}`}>{taxed}</td>
                            <td className={`pr-0.5 text-right leading-4 ${cell}`}>{net}</td>
                        </tr>
                    ))}
                </tbody>
            </table>
        </div>
        <div className="mr-0.5 flex"><VScroll thumb="justify-end mb-1" /></div>
    </div>
)

const dialogTabs = [
    ['清单指引', 'w-[66px] pl-[7px]'], ['清单', 'w-[52px] pl-[11px]'], ['定额', 'w-[52px]'], ['人材机', 'w-[58px] pl-3'], ['补充人材机', 'w-[82px] pl-[11px]'],
]

const Marks = () => (
    <svg className="pointer-events-none absolute top-0 left-0 h-full w-full overflow-visible" stroke="#fe0000" strokeWidth="7" fill="none" aria-hidden="true">
        <ellipse cx="38.5" cy="105" rx="109.500" ry="23" strokeWidth="7.5" />
        <ellipse cx="125" cy="224" rx="109.5" ry="19.5" strokeWidth="7.5" />
        <ellipse cx="491" cy="434.500" rx="272.5" ry="10" />
        <path d="M213.5 394.5 V400" strokeLinecap="round" />
    </svg>
)

const QueryDialog = () => (
    <section role="dialog" aria-label="查询" className={`absolute top-[154px] left-[256px] flex h-[513px] w-[853px] flex-col border border-[#2b8ae8] bg-[#f0f0f0] text-xs shadow-[0_3px_16px_rgba(0,0,0,0.35)] ${song}`}>
        <div className="flex h-[30px] shrink-0 items-center bg-white pl-2">
            <AppIcon className="w-4 h-4" />
            <h2 className="ml-[5px]">查询</h2>
            <div className="ml-auto flex">
                <Tool label="最小化" className="w-[46px]"><span className="h-px w-2.5 bg-[#c4c4c4]" /></Tool>
                <Tool label="最大化" className="w-[46px]"><span className="h-[11px] w-[11px] border border-black" /></Tool>
                <Tool label="关闭" className="w-[46px]"><CrossIcon className="w-3.5 h-3.5" stroke="#000" width={1.2} /></Tool>
            </div>
        </div>
        <div className="flex h-[27px] shrink-0">
            <div className="flex h-[22px]">
                {dialogTabs.map(([t, w]) => (
                    <button type="button" key={t} className={`flex items-center border-r border-[#a0a0a0] ${w}`}>
                        {t === '定额' ? (
                            <span className="ml-[5px] flex h-5 w-[41px] items-center border border-[#707070] border-r-white border-b-white bg-[#f8f8f8] pl-1.5">{t}</span>
                        ) : t}
                    </button>
                ))}
            </div>
            <div className="ml-auto flex items-start gap-1 pt-[3px]">
                <GreyButton className="w-[73px]">插入(I)</GreyButton>
                <GreyButton className="w-[70px]">替换(R)</GreyButton>
            </div>
        </div>
        <div className="flex min-h-0 grow gap-1">
            <div className="flex w-[215px] shrink-0 flex-col">
                <div className="relative">
                    <select aria-label="定额库" className="h-5 w-full appearance-none border border-[#adadad] bg-[#e1e1e1] pl-0.5">
                        <option>湖北省园林绿化工程消耗量定额及统</option>
                    </select>
                    <Chevron dir="down" className="absolute top-[5px] right-1 w-2.5 h-2.5" color="#606060" />
                </div>
                <div className="flex h-[22px] items-end">
                    <button type="button" className="h-5 w-[62px] pl-0.5">章节查询</button>
                    <button type="button" className="h-[18px] w-[58px] border border-b-0 border-[#d9d9d9]">条件查询</button>
                </div>
                <div className="mb-px flex min-h-0 grow flex-col border-t border-r border-b border-white pt-[3px] pr-0.5 pl-1">
                    <div className="flex grow flex-col border border-[#828790] bg-white pb-px">
                        <ChapterTree />
                        <HScroll thumb="w-[149px]" />
                    </div>
                    <div className="flex h-10 items-center pl-2.5">
                        <Radio name="scope" label="标准" className="w-16 gap-2" tone="border-[#a0a0a0]" />
                        <Radio name="scope" label="补充" className="w-16 gap-2" tone="border-[#a0a0a0]" />
                        <Radio name="scope" label="全部" checked className="gap-2" tone="border-[#a0a0a0]" />
                    </div>
                </div>
            </div>
            <QuotaTable />
        </div>
        <Marks />
    </section>
)

/* ---------- bottom ---------- */

const StatusBar = () => (
    <footer className={`flex h-[21px] shrink-0 gap-0.5 pt-0.5 pb-px text-xs leading-4 whitespace-nowrap ${song}`}>
        <span className="min-w-0 flex-1 border border-[#dadada] bg-[#f6f6f6] pl-px">清单库: 工程量清单项目计量规范(2013-湖北)</span>
        <span className="min-w-0 flex-1 border border-[#dadada] bg-[#f6f6f6] pl-px">定额库: 湖北省房屋建筑与装饰工程消耗量定额及基价表(2013)</span>
        <span className="w-[225px] border border-[#dadada] bg-[#f6f6f6] pl-px">定额专业: 建筑工程</span>
        <span className="w-[200px] border border-[#dadada] bg-[#f6f6f6] pl-px">当前分部: 混凝土及钢筋混凝土工程</span>
        <span className="w-[183px] border border-[#dadada] bg-[#f6f6f6] pl-px">计税模式: 增值税(一般计税方法)</span>
    </footer>
)

const TaskItem = ({ label, running, active, children }) => (
    <button type="button" aria-label={label} className={`flex h-10 w-[49px] flex-col items-center justify-center ${active ? 'bg-[#353d40]' : ''}`}>
        <span className="flex grow items-center justify-center pt-0.5">{children}</span>
        <span className={`h-[3px] ${active ? 'w-full' : 'w-10'} ${running ? 'bg-[#76b9ed]' : ''}`} />
    </button>
)

const TaskBar = () => (
    <div className="flex h-10 shrink-0 items-center bg-[#03090c] text-xs text-white">
        <button type="button" aria-label="开始" className="flex h-10 w-12 items-center justify-center">
            <Svg><path d="M0 2.3 L6.8 1.4 V7.5 H0 Z M7.7 1.3 L16 0 V7.5 H7.7 Z M0 8.5 H6.8 V14.6 L0 13.7 Z M7.7 8.5 H16 V16 L7.7 14.7 Z" fill="#fff" /></Svg>
        </button>
        <label className="flex h-10 w-[344px] items-center bg-[#333] pl-2.5">
            <span className="h-[21px] w-[21px] shrink-0 rounded-full border-3 border-white" />
            <input type="text" aria-label="搜索" placeholder="在这里输入你要搜索的内容" className="ml-[5px] w-full min-w-0 bg-transparent text-sm placeholder:text-[#a0a0a0]" />
            <Mic className="mr-3 h-[18px] w-[18px] shrink-0 text-[#a0a0a0]" strokeWidth={1.5} />
        </label>
        <div className="ml-px flex">
            <TaskItem label="搜狗助手">
                <Svg className="w-[22px] h-[22px]" box="0 0 22 22">
                    <path d="M10.500 10.500 C6 11 2 9 2 5.500 C2 1 8 0 10.500 3 Z" fill="#e8e8e8" />
                    <path d="M11.500 10.500 C11 6 12 1 16.500 1.500 C21 2 21.500 7 19 9.500 Z" fill="#e8e8e8" />
                    <path d="M11.500 11.500 C16 11 20 13 20 16.500 C20 21 14 22 11.500 19 Z" fill="#e8e8e8" />
                    <path d="M10.500 11.500 C11 16 10 21 5.500 20.500 C1 20 0.500 15 3 12.500 Z" fill="#e8e8e8" />
                </Svg>
            </TaskItem>
            <TaskItem label="广联达">
                <Svg className="w-[22px] h-[22px]" box="0 0 22 22">
                    <path d="M18 3 C10 0 3 5 3 11 C3 17 8 20 12 19.5 C17 19 19 14 16.5 11 C14 8 9 9.5 9.5 12.5 C10 15 13 15 13.5 13" stroke="#dedede" strokeWidth="1.5" />
                    <path d="M19 4 C12 3.5 6 6 6 11 C6 14 8 17 11 17" stroke="#dedede" strokeWidth="1.2" />
                </Svg>
            </TaskItem>
            <TaskItem label="Edge">
                <Svg className="w-[22px] h-[22px]" box="0 0 22 22">
                    <path d="M1.5 9.5 C3 3 7 1 11.5 1 C17.5 1 20.5 5.5 20.5 10 V12.5 H8 C8 16 11 17.5 14 17.5 C16 17.5 18 17 19.5 16 V20 C17.5 21 15.5 21.5 13 21.5 C7.5 21.5 4 18 4 13.5 C4 10.5 6 8 9 7 C8.3 8 8 8.8 8 9.5 H15 C15 7 13.5 5.5 11 5.5 C7 5.5 4 7 1.5 9.5 Z" fill="#0b78d4" />
                </Svg>
            </TaskItem>
            <TaskItem label="应用商店">
                <Svg className="w-[22px] h-[22px]" box="0 0 22 22">
                    <path d="M7.5 6 V2 H14.5 V6" stroke="#fff" strokeWidth="1.5" />
                    <path d="M1 5.5 H21 V21 L1 19 Z" fill="#fff" />
                    <path d="M6 9 H10.2 V12.7 H6 Z M11.2 9 H16 V12.7 H11.2 Z M6 13.7 H10.2 V17.3 H6 Z M11.2 13.7 H16 V17.7 L11.2 17.3 Z" fill="#06100f" />
                </Svg>
            </TaskItem>
            <TaskItem label="文件资源管理器">
                <Svg className="w-[22px] h-[22px]" box="0 0 22 22">
                    <path d="M1 3 H9 L10.5 5 H21 V19 H1 Z" fill="#f5c84c" />
                    <rect x="1" y="7" width="20" height="12" fill="#fde08c" />
                    <path d="M4 20 V12 H18 V20 H14.5 V16 H7.5 V20 Z" fill="#3fa9e4" />
                </Svg>
            </TaskItem>
            <TaskItem label="广联达服务" running>
                <Svg className="w-6 h-6" box="0 0 24 24">
                    <path d="M23 2 C17 3 9 0 4 6 C0 12 3 21 10 22.5 C17 23.5 22 19 20 12 C19 9.5 14 9 12.5 11 C15.5 11 16 14 14 16 C11 18 7.5 15 8.5 10.5 C10 6 18 7 23 2 Z" fill="#1795e8" />
                </Svg>
            </TaskItem>
            <TaskItem label="浏览器" running>
                <Svg className="w-6 h-6" box="0 0 24 24">
                    <circle cx="12" cy="12" r="9.5" fill="#45b42e" />
                    <path d="M7 12.5 H17 C17 6 8 6 7 12.5 C7 18.5 14.5 19 17 15.5" stroke="#fff" strokeWidth="2.5" />
                    <path d="M2 20 C-1 15 14 1 22 3" stroke="#9ade3c" strokeWidth="1.8" />
                </Svg>
            </TaskItem>
            <TaskItem label="上传工具" running>
                <Svg className="w-6 h-6" box="0 0 24 24">
                    <rect x="0.5" y="0.5" width="23" height="23" rx="4" fill="#0d8ff0" />
                    <path d="M12 18 V8 C12 4 17 4.5 16.500 8 M5 12 C5 20 19 20 19 12 M8 12.5 H16" stroke="#fff" strokeWidth="2.2" />
                </Svg>
            </TaskItem>
            <TaskItem label="计价软件" running active><AppIcon className="w-6 h-6" /></TaskItem>
        </div>
        <div className="ml-auto flex items-center">
            <div className="w-[76px] text-center leading-[17px]">71%<br />CPU使用</div>
            <Tool label="显示隐藏的图标" className="w-[22px]"><ChevronUp className="w-4 h-4" /></Tool>
            <Tool label="电源" className="w-[26px]">
                <Svg><rect x="5" y="4.5" width="9.5" height="8" stroke="#fff" strokeWidth="1.2" /><rect x="7" y="6.5" width="5.5" height="4" fill="#fff" /><path d="M1 3 V6 H5 V3 M2 1 V3 M4 1 V3 M3 6 V9 H5" stroke="#fff" /></Svg>
            </Tool>
            <Tool label="网络" className="w-[22px]">
                <Svg><path d="M2 14 C2 7 7 2.5 14 2.5 M5 14 C5 9 9 5.5 14 5.5 M8 14 C8 11 11 8.5 14 8.5" stroke="#c0c0c0" strokeWidth="1.2" /><circle cx="12.5" cy="13" r="1.5" fill="#fff" /></Svg>
            </Tool>
            <Tool label="音量" className="w-6">
                <Svg><path d="M1 6 H3.5 L7 2.5 V13.5 L3.5 10 H1 Z" stroke="#fff" /><path d="M9 5.5 C10.5 7 10.5 9 9 10.5 M11 3.5 C13.5 6 13.5 10 11 12.5 M13 2 C16 5.5 16 10.5 13 14" stroke="#fff" /></Svg>
            </Tool>
            <Tool label="触摸键盘" className="w-8">
                <Svg className="w-6 h-3.5" box="0 0 24 14"><rect x="0.5" y="0.5" width="23" height="13" stroke="#fff" /><path d="M3 3.5 H21 M3 6 H21" stroke="#fff" strokeDasharray="1.5 1.5" strokeWidth="1.5" /><path d="M3 10 H21" stroke="#fff" strokeWidth="1.5" strokeDasharray="2 2 10 2 2" /></Svg>
            </Tool>
            <button type="button" className="w-6 text-sm">中</button>
            <Tool label="搜狗输入法" className="w-8"><SogouIcon className="w-4 h-4" /></Tool>
            <div className="w-[78px] text-center leading-[17px]">8:49<br />2017/9/21</div>
            <button type="button" aria-label="通知" className="relative flex h-10 w-9 items-center justify-center">
                <Svg><path d="M1 1 H15 V12 H8 L5 15 V12 H1 Z" fill="#fff" /><path d="M3.5 4 H12.5 M3.5 6.5 H12.5 M3.5 9 H12.5" stroke="#111" /></Svg>
                <span className="absolute right-[-2px] bottom-0.5 flex h-5 w-5 items-center justify-center rounded-full bg-[#4b4b4b] text-[11px] font-bold">20</span>
            </button>
            <span className="ml-2.5 h-10 w-[5px] border-l border-[#505050]" />
        </div>
    </div>
)

/* ---------- floating widgets ---------- */

const ImeBar = () => (
    <div className="absolute top-[26px] left-[820px] flex h-6 w-[170px] items-center gap-1.5 border border-[#a9c4e0] bg-[#fbfcfe] pl-[18px] text-[#1e74c8]">
        <span className="absolute top-[-4px] left-[-15px]"><SogouIcon className="w-7 h-7" /></span>
        <span className="text-sm font-bold">中</span>
        <Svg><circle cx="4" cy="6" r="1.8" stroke="#1e74c8" strokeWidth="1.2" /><path d="M10 9 H12.5 C13 11 12 13 10 14" stroke="#1e74c8" strokeWidth="2" /></Svg>
        <Svg><rect x="5.5" y="0.5" width="5" height="9" rx="2.5" fill="#1e74c8" /><path d="M3 6.5 C3 13.5 13 13.5 13 6.5 M8 12 V15 M5 15 H11" stroke="#1e74c8" strokeWidth="1.5" /></Svg>
        <Svg><rect x="0.5" y="2.5" width="15" height="11" rx="1" fill="#1e74c8" /><path d="M2.5 5.5 H13.5 M2.5 8 H13.5 M4 11 H12" stroke="#fff" strokeDasharray="2 1" strokeWidth="1.5" /></Svg>
        <Svg><circle cx="7" cy="4" r="3" fill="#adb9c9" /><path d="M1 14 C1 7.5 12 7.5 13 10 H8 V14 Z" fill="#adb9c9" /><path d="M9.5 10 V15.5 M11.5 10.5 H15.5 L13.5 15.5" stroke="#adb9c9" strokeWidth="1.5" /></Svg>
        <Svg><path d="M5 1 C6 3 10 3 11 1 L16 4 L14 7.5 L12.5 7 V15 H3.5 V7 L2 7.5 L0 4 Z" fill="#1e74c8" /></Svg>
        <Svg><path d="M15.5 4 L12.5 6 L10.5 5.5 L10 3.5 L12.5 1 C9 0 6.5 3 7.5 6 L1 12.5 C0 14 2 16 3.5 15 L10 8.5 C13 9.5 16 7 15.5 4 Z" fill="#1e74c8" /></Svg>
    </div>
)

const App = () => (
    <div className="relative flex h-screen w-full flex-col overflow-hidden bg-[#f0f0f0] font-['Noto_Sans','Noto_Sans_CJK_SC',sans-serif] text-black">
        <TitleBar />
        <MenuBar />
        <MainToolbar />
        <main className="flex min-h-0 grow">
            <SideTabs />
            <SectionPanel />
            <div className="flex w-[7px] shrink-0 items-center justify-center">
                <div className="h-[100px] w-[5px] border border-[#909090]" />
            </div>
            <div className="flex min-w-0 grow flex-col">
                <EditToolbar />
                <BillGrid />
                <div className="flex min-h-0 grow">
                    <div className="flex min-w-0 grow flex-col">
                        <div className="flex h-[29px] shrink-0 items-end pl-0.5">
                            <button type="button" className={`h-[21px] border border-[#808080] border-b-0 bg-[#f8f8f8] px-1.5 text-xs ${song}`}>工料机显示</button>
                        </div>
                        <ResourceGrid />
                    </div>
                    <div className="flex pt-[29px]"><SidePanel /></div>
                </div>
            </div>
        </main>
        <StatusBar />
        <TaskBar />
        <QueryDialog />
        <ImeBar />
        <div className="absolute top-[-24px] left-[859px] flex h-11 w-11 items-end justify-center rounded-full border-2 border-[#e8f4e8] bg-[#3fc058] pb-1 text-[13px] leading-4 font-bold text-white shadow-[0_1px_4px_rgba(0,0,0,0.6)]">67</div>
    </div>
)

export default App
